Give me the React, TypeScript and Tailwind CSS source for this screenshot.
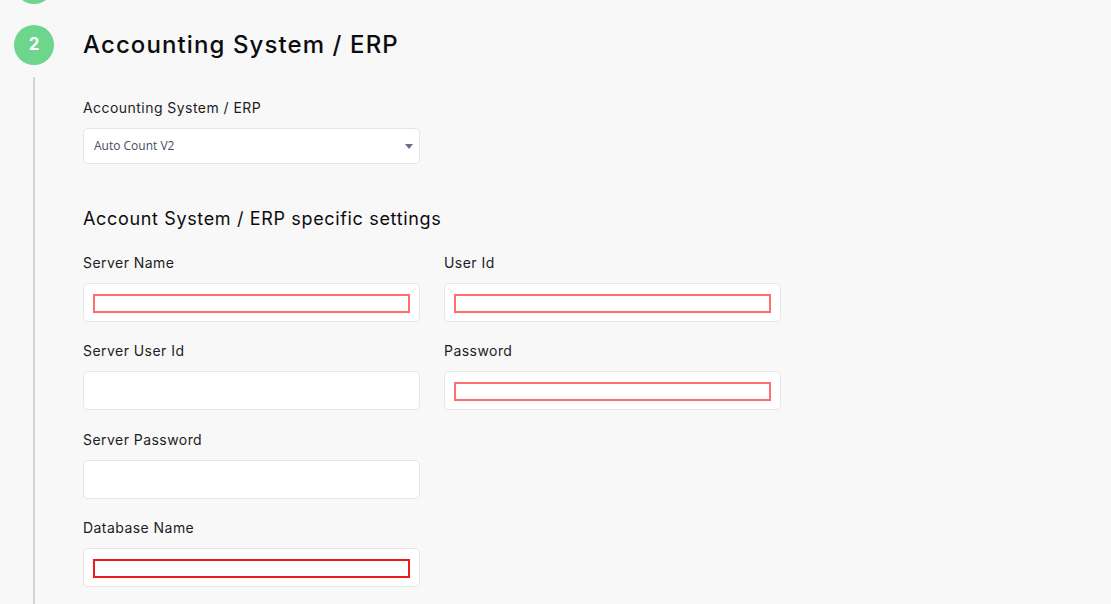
import React from "react";

const font = { fontFamily: "Inter, 'DejaVu Sans', sans-serif" };

function RedInput({ color = "border-[#ff6f6f]" }: { color?: string }) {
  return (
    <div className="h-[39px] rounded-[5px] border border-[#e6e6e6] bg-white px-[9px] pt-[10px]">
      <div className={"h-[19px] border-2 " + color} />
    </div>
  );
}

function PlainInput() {
  return <div className="h-[39px] rounded-[5px] border border-[#e6e6e6] bg-white" />;
}

function Field({ label, children }: { label: string; children: React.ReactNode }) {
  return (
    <div className="flex w-[337px] flex-col">
      <div className="h-[22px] pt-[2px] text-[14px] leading-5 tracking-[0.45px] text-[#1c1c24]">{label}</div>
      <div className="mt-[10px]">{children}</div>
    </div>
  );
}

export default function App() {
  return (
    <div className="h-[604px] w-full overflow-hidden bg-[#f8f8f8]" style={font}>
      {/* previous step (clipped) */}
      <div className="-mt-[36px] ml-[14px] h-10 w-10 rounded-full bg-[#6dd58c]" />
      {/* step 2 header */}
      <div className="mt-[21px] flex items-center">
        <div className="ml-[14px] flex h-10 w-10 items-center justify-center rounded-full bg-[#6dd58c] text-[17px] font-bold text-white">
          2
        </div>
        <h1 className="ml-[29px] text-[24px] font-medium tracking-[1.1px] text-[#0c0c10]">
          Accounting System / ERP
        </h1>
      </div>
      <div className="mt-3 flex">
        <div className="ml-[33px] h-[600px] w-[2px] bg-[#d2d2dc]" />
        <div className="ml-[48px] flex flex-col pt-[19px]">
          <Field label="Accounting System / ERP">
            <div className="relative flex h-[36px] items-center rounded-[5px] border border-[#e6e6e6] bg-white pl-[10px]">
              <span
                className="text-[12px] text-[#4b4b5e]"
                style={{ fontFamily: "'Open Sans', sans-serif" }}
              >
                Auto Count V2
              </span>
              <svg className="absolute right-[6px] top-[15px]" width="8" height="5" viewBox="0 0 8 5">
                <path d="M0 0 H8 L4 5 Z" fill="#6b6f8a" />
              </svg>
            </div>
          </Field>
          <h2 className="mt-[40px] h-7 pt-[1px] text-[18px] font-normal leading-7 tracking-[0.65px] text-[#0c0c10]">
            Account System / ERP specific settings
          </h2>
          <div className="mt-[19px] grid grid-cols-[337px_337px] gap-x-6 gap-y-[17.3px]">
            <Field label="Server Name">
              <RedInput />
            </Field>
            <Field label="User Id">
              <RedInput />
            </Field>
            <Field label="Server User Id">
              <PlainInput />
            </Field>
            <Field label="Password">
              <RedInput />
            </Field>
            <Field label="Server Password">
              <PlainInput />
            </Field>
            <div />
            <Field label="Database Name">
              <RedInput color="border-[#f01818]" />
            </Field>
          </div>
        </div>
      </div>
    </div>
  );
}
